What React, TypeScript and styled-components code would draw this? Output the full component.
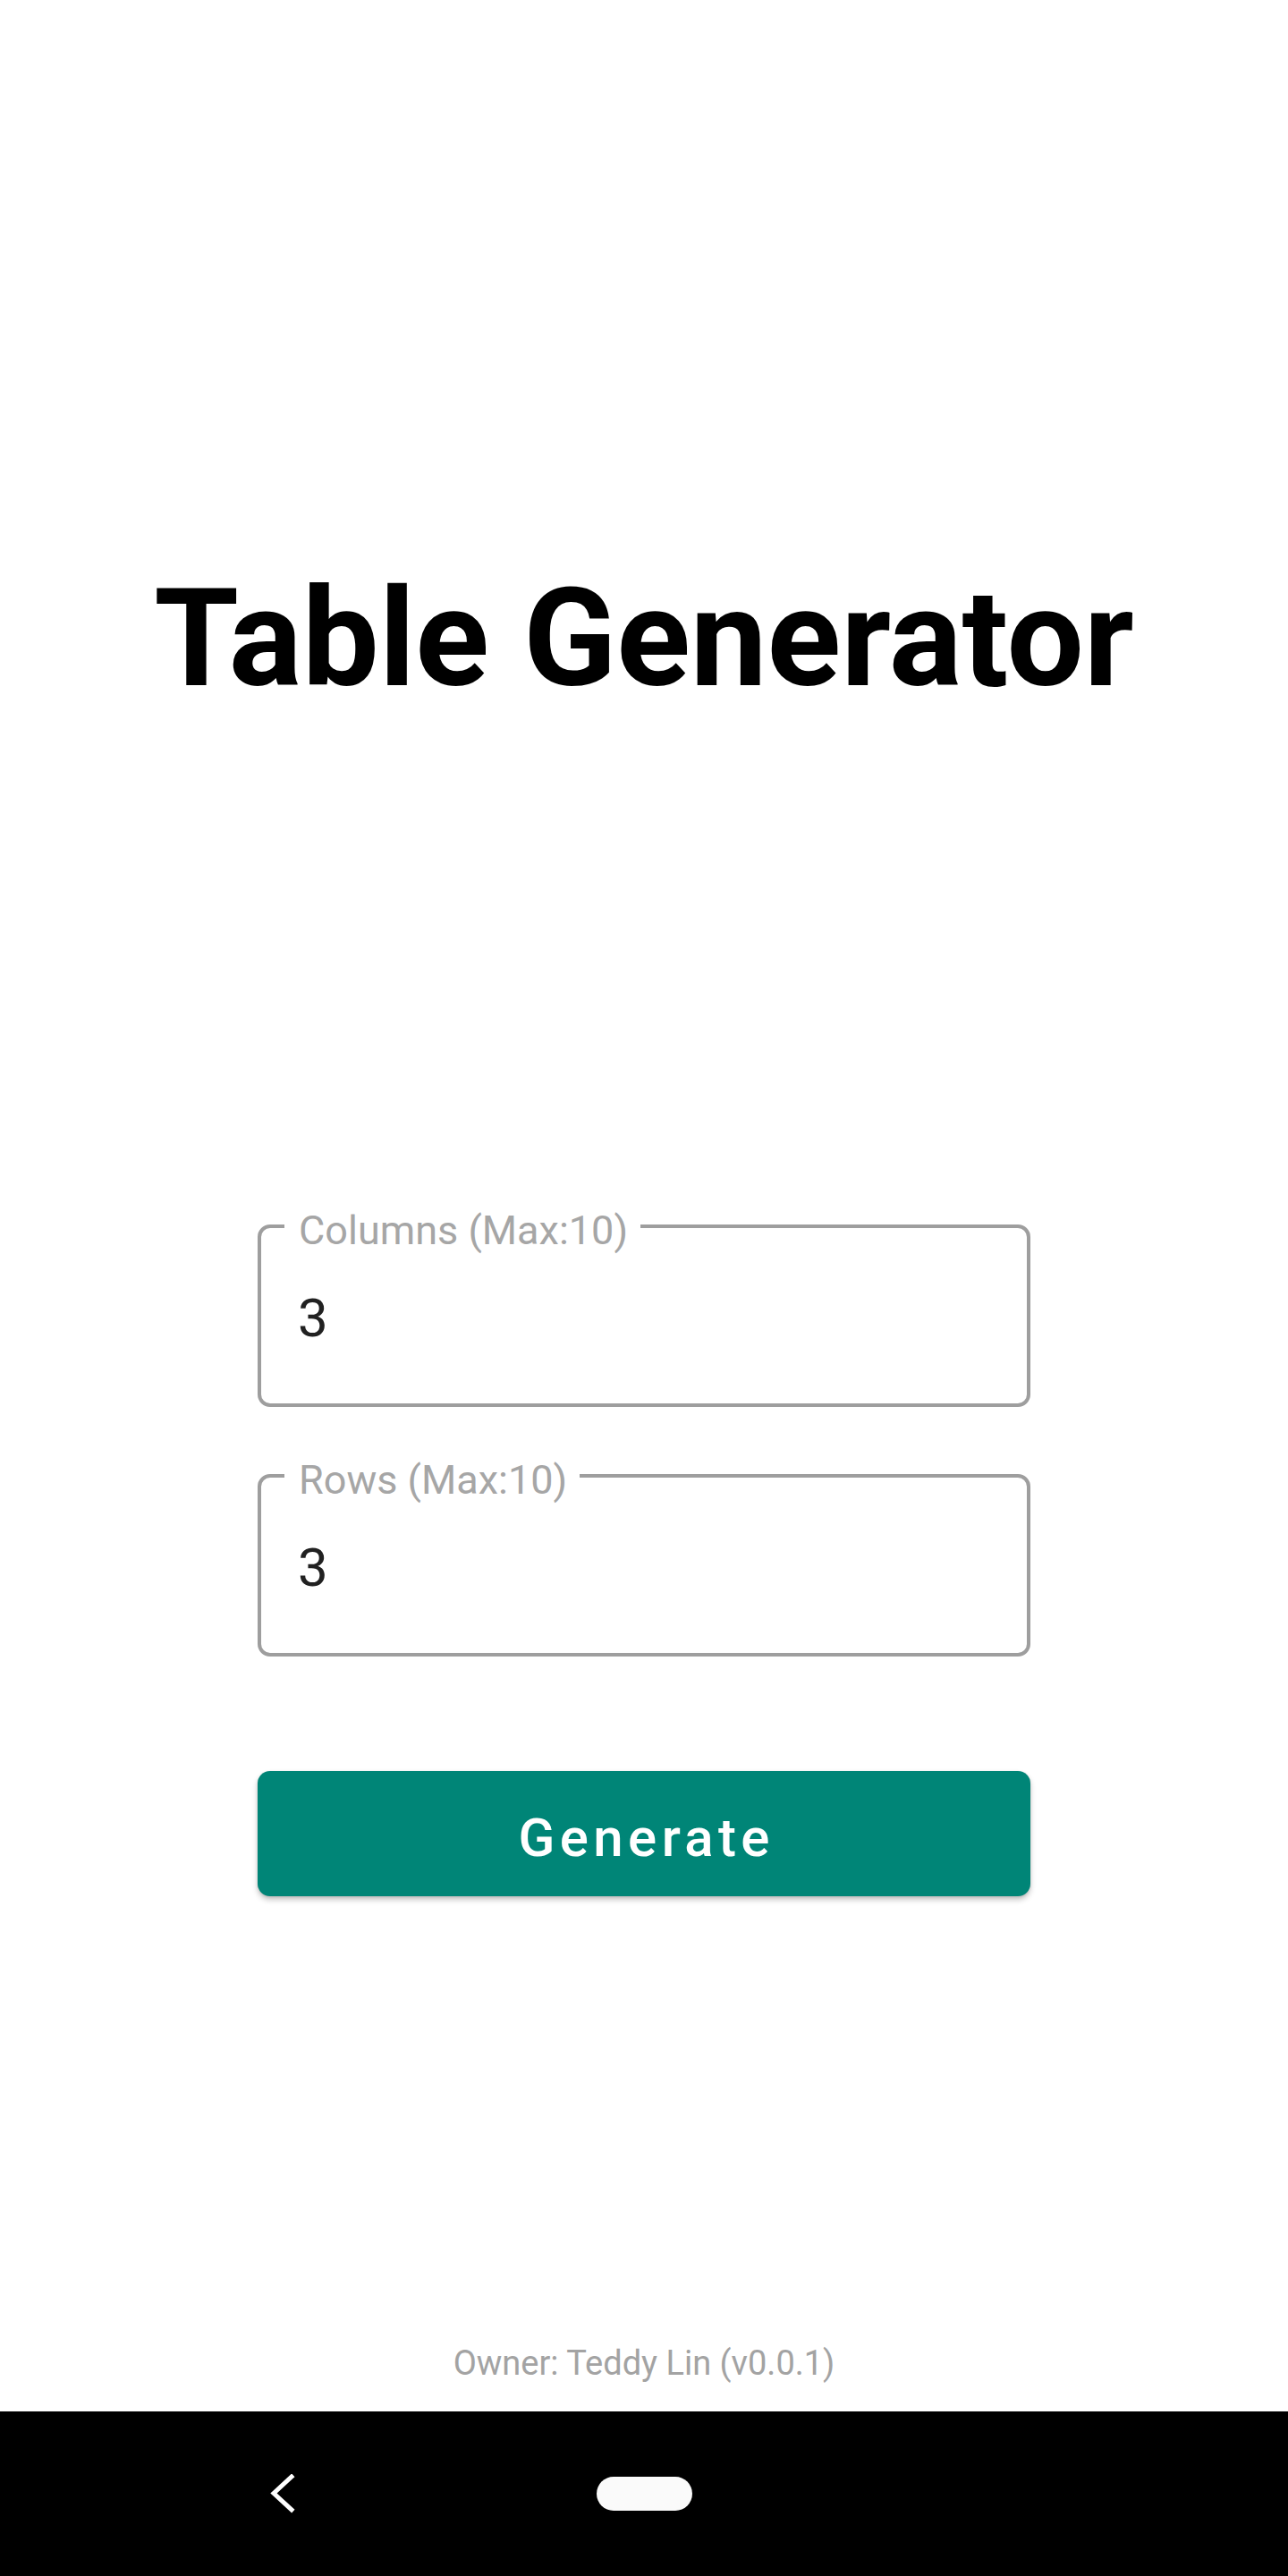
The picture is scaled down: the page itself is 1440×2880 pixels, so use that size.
import React from "react";
import styled, { createGlobalStyle } from "styled-components";

const GlobalStyle = createGlobalStyle`
  html, body {
    margin: 0;
    padding: 0;
    background: #ffffff;
  }
  body {
    font-family: Roboto, "Noto Sans", "Liberation Sans", sans-serif;
  }
  * { box-sizing: border-box; }
`;

const Page = styled.div`
  width: 1440px;
  min-height: 2880px;
  display: flex;
  flex-direction: column;
  background: #ffffff;
`;

const Main = styled.main`
  flex: 1;
  display: flex;
  flex-direction: column;
  align-items: center;
  padding-top: 637px;
`;

const Title = styled.h1`
  margin: 0;
  font-family: Roboto, "Liberation Sans", sans-serif;
  font-weight: 700;
  font-size: 153px;
  line-height: 153px;
  color: #000000;
  letter-spacing: 0;
`;

const Form = styled.form`
  width: 864px;
  margin-top: 554px;
  display: flex;
  flex-direction: column;
`;

const FieldGroup = styled.div`
  display: flex;
  flex-direction: column;
  gap: 50px;
`;

const Field = styled.fieldset`
  margin: 0;
  padding: 0 0 20px 0;
  width: 864px;
  border: 4px solid #9e9e9e;
  border-radius: 14px;
  min-inline-size: 0;
`;

const Legend = styled.legend`
  margin-left: 26px;
  padding: 10px 14px 0 16px;
  font-family: Roboto, "Liberation Sans", sans-serif;
  font-size: 45px;
  line-height: 44px;
  color: #a6a6a6;
  font-weight: 400;
`;

const Input = styled.input`
  display: block;
  width: 100%;
  height: 151px;
  margin: 0;
  padding: 0 0 0 41px;
  border: none;
  outline: none;
  background: transparent;
  font-family: Roboto, "Liberation Sans", sans-serif;
  font-size: 60px;
  line-height: 151px;
  color: #212121;
`;

const Button = styled.button`
  margin-top: 128px;
  width: 864px;
  height: 140px;
  padding: 9px 0 0 0;
  border: none;
  border-radius: 14px;
  background: #008577;
  color: #ffffff;
  font-family: Roboto, "Liberation Sans", sans-serif;
  font-weight: 500;
  font-size: 60px;
  letter-spacing: 5.4px;
  text-indent: 5.4px;
  box-shadow: 0 4px 6px rgba(0, 0, 0, 0.22), 0 1px 3px rgba(0, 0, 0, 0.12);
  cursor: pointer;
`;

const Footer = styled.footer`
  margin-top: auto;
  margin-bottom: 35px;
  font-family: Roboto, "Liberation Sans", sans-serif;
  font-size: 38px;
  line-height: 38px;
  color: #a3a3a3;
`;

const NavBar = styled.nav`
  height: 184px;
  background: #000000;
  display: grid;
  grid-template-columns: 630px 180px 630px;
  align-items: center;
  justify-items: center;
`;

const NavButton = styled.div`
  display: flex;
  align-items: center;
  justify-content: center;
  width: 120px;
  height: 120px;
`;

const HomePill = styled.div`
  width: 107px;
  height: 38px;
  border-radius: 19px;
  background: #fafafa;
`;

export default function App() {
  return (
    <>
      <GlobalStyle />
      <Page>
        <Main>
          <Title>Table Generator</Title>
          <Form onSubmit={(e) => e.preventDefault()}>
            <FieldGroup>
              <Field>
                <Legend>Columns (Max:10)</Legend>
                <Input type="text" defaultValue="3" />
              </Field>
              <Field>
                <Legend>Rows (Max:10)</Legend>
                <Input type="text" defaultValue="3" />
              </Field>
            </FieldGroup>
            <Button type="submit">Generate</Button>
          </Form>
          <Footer>Owner: Teddy Lin (v0.0.1)</Footer>
        </Main>
        <NavBar>
          <NavButton>
            <svg width="30" height="44" viewBox="0 0 30 44" aria-hidden="true">
              <polyline
                points="26,3 6,21.5 26,40"
                fill="none"
                stroke="#ffffff"
                strokeWidth="5"
                strokeLinecap="square"
                strokeLinejoin="miter"
              />
            </svg>
          </NavButton>
          <HomePill />
          <div />
        </NavBar>
      </Page>
    </>
  );
}
